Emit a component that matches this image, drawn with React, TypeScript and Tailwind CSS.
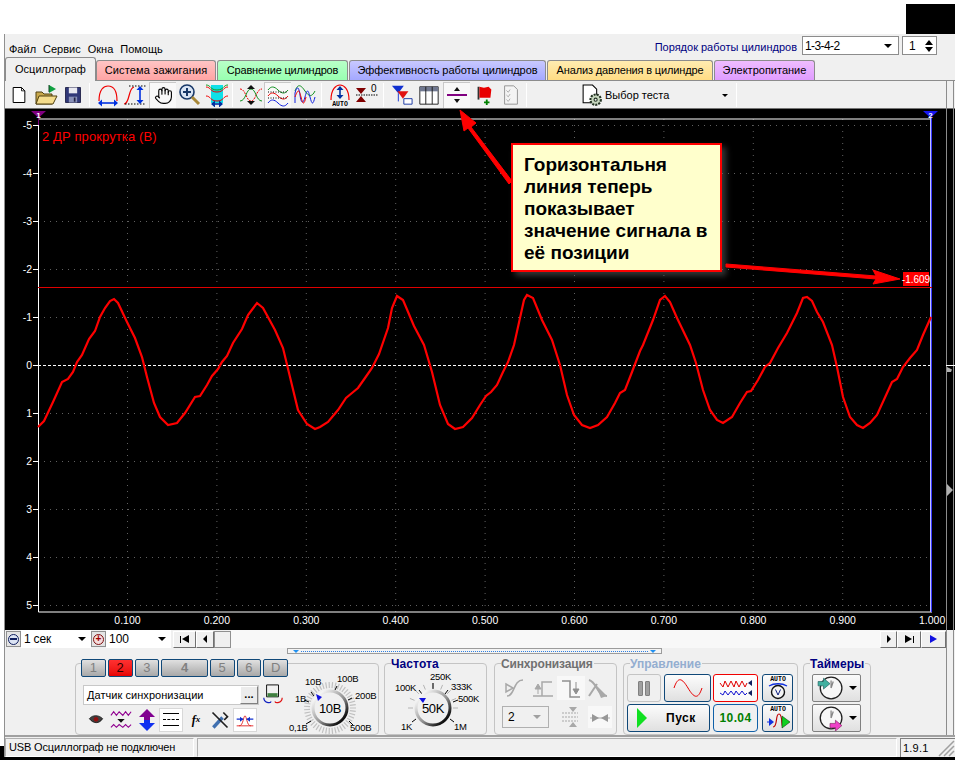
import React from 'react';
import { Hand } from 'lucide-react';

const wave =
  '38,427 44,421 53,402 62,382 68,379 73,372 77,362 82,355 89,339 95,331 100,317 105,308 110,301 114,299 118,303 127,322 135,338 142,357 147,377 154,403 160,417 168,425 177,423 185,413 195,397 200,396 207,385 212,376 218,369 222,362 227,356 233,343 242,329 248,315 257,303 263,308 275,330 283,348 290,377 298,410 307,424 315,429 320,427 ' +
  '328,422 338,410 346,398 352,393 358,388 365,378 372,368 379,354 388,328 392,308 397,296 403,300 414,326 424,345 432,372 440,405 448,424 455,429 463,427 472,418 480,405 486,396 491,392 497,385 503,372 508,362 514,345 520,318 524,300 527,295 533,298 542,320 552,340 560,365 567,395 574,415 582,425 590,428 598,425 607,417 615,403 620,393 625,390 632,372 ' +
  '640,351 643,345 653,320 660,300 665,296 670,302 677,318 690,345 696,363 703,390 710,410 717,420 723,423 732,417 740,403 747,392 751,391 758,380 765,367 770,363 778,348 787,333 797,313 803,298 807,297 812,301 817,312 823,322 832,345 837,367 843,397 850,417 857,425 863,428 870,423 877,415 887,393 892,382 897,379 903,367 910,358 917,350 923,335 931,317';

const yLabels = [-5, -4, -3, -2, -1, 0, 1, 2, 3, 4, 5];
const xLabels = ['0.100', '0.200', '0.300', '0.400', '0.500', '0.600', '0.700', '0.800', '0.900', '1.000'];

const tabs = [
  { label: 'Система зажигания', cls: 'w-[120px] tracking-[0.15px] from-[#ffc4c4] to-[#ffa4a4]' },
  { label: 'Сравнение цилиндров', cls: 'w-[131px] tracking-[-0.2px] from-[#b8ffc8] to-[#98ffb0]' },
  { label: 'Эффективность работы цилиндров', cls: 'w-[197px] tracking-[-0.05px] from-[#c8c8ff] to-[#a4a8ff]' },
  { label: 'Анализ давления в цилиндре', cls: 'w-[166px] tracking-[-0.15px] from-[#ffecb0] to-[#ffdc84]' },
  { label: 'Электропитание', cls: 'w-[101px] from-[#efbcff] to-[#e09cff]' },
];

const channels = [
  { label: '1', cls: 'w-[25px]' },
  { label: '2', cls: 'w-[25px]', active: true },
  { label: '3', cls: 'w-[25px]' },
  { label: '4', cls: 'w-[47px] font-bold' },
  { label: '5', cls: 'w-[25px]' },
  { label: '6', cls: 'w-[25px]' },
  { label: 'D', cls: 'w-[25px]' },
];

const Ico = ({ children, size = 24 }: { children: React.ReactNode; size?: number }) => (
  <svg width={size} height={size} viewBox="0 0 24 24" fill="none">
    {children}
  </svg>
);

const ArrowH = ({ y, x1, x2, c }: { y: number; x1: number; x2: number; c: string }) => (
  <>
    <path d={`M${x1} ${y}H${x2}`} stroke={c} strokeWidth="1.6" />
    <path d={`M${x1 - 1} ${y}l4-3.5v7zM${x2 + 1} ${y}l-4-3.5v7z`} fill={c} />
  </>
);

const ArrowV = ({ x, y1, y2, c }: { x: number; y1: number; y2: number; c: string }) => (
  <>
    <path d={`M${x} ${y1}V${y2}`} stroke={c} strokeWidth="1.6" />
    <path d={`M${x} ${y1 - 1}l-3.5 4h7zM${x} ${y2 + 1}l-3.5-4h7z`} fill={c} />
  </>
);

const Sep = () => <div className="w-[1px] h-[24px] bg-[#a8a8a8] border-r border-white" />;

const ToolBtn = ({ children, pressed, cls = '' }: { children: React.ReactNode; pressed?: boolean; cls?: string }) => (
  <div
    className={`w-[27px] h-[26px] flex items-center justify-center ${pressed ? 'bg-[#f8f8f8] border-t border-l border-[#c8c8c8]' : ''} ${cls}`}
  >
    {children}
  </div>
);

const Rail = () => <div className="w-[8px] self-stretch border-x border-[#8c8c8c] mr-[1px] shrink-0" />;

const CtrlBtn = ({ children, cls }: { children?: React.ReactNode; cls: string }) => (
  <div
    className={`h-[28px] flex items-center justify-center rounded-[3px] border bg-gradient-to-b from-[#fcfcfc] to-[#e0e0e0] ${cls}`}
  >
    {children}
  </div>
);

const Group = ({ title, titleCls, cls, children }: { title?: string; titleCls?: string; cls: string; children: React.ReactNode }) => (
  <div className={`relative h-[72px] border border-[#c4c4c4] rounded-[4px] ${cls}`}>
    {title && (
      <div className={`absolute -top-[7px] left-[6px] bg-[#f0f0f0] pr-[1px] text-[12px] leading-[14px] font-bold ${titleCls}`}>
        {title}
      </div>
    )}
    {children}
  </div>
);

const ticks = (cx: number, cy: number, r1: number, r2: number, from: number, to: number, n: number) =>
  Array.from({ length: n }, (_, i) => {
    const a = ((from + ((to - from) * i) / (n - 1)) * Math.PI) / 180;
    return `M${cx + r1 * Math.cos(a)} ${cy + r1 * Math.sin(a)}L${cx + r2 * Math.cos(a)} ${cy + r2 * Math.sin(a)}`;
  }).join('');

const Knob = ({ cx, cy, label, id }: { cx: number; cy: number; label: string; id: string }) => (
  <>
    <defs>
      <linearGradient id={id} x1="0" y1="0" x2="1" y2="1">
        <stop offset="0.15" stopColor="#f4f4f4" />
        <stop offset="0.55" stopColor="#909090" />
        <stop offset="0.85" stopColor="#101010" />
      </linearGradient>
    </defs>
    <circle cx={cx} cy={cy} r="17" fill="#f0f0f0" stroke={`url(#${id})`} strokeWidth="3" />
    <text x={cx} y={cy + 5} textAnchor="middle" fontSize="13" letterSpacing="-0.3" fill="#000">
      {label}
    </text>
  </>
);

const VoltDial = () => (
  <svg width="90" height="70" viewBox="288 664 90 70" className="shrink-0" fontFamily="Liberation Sans" fontSize="9.5" letterSpacing="-0.2" fill="#000">
    <path d={ticks(330, 708, 20, 26, 0, 360, 48)} stroke="#c0c0c0" strokeWidth="1.2" />
    <path
      d="M311 692l3 4M337 686l-2 4M352 698l-4 2M304 700l5 2M306 724l5-3M349 721l4 4"
      stroke="#000"
    />
    <Knob cx={330} cy={708} label="10В" id="voltKnob" />
    <path d="M316 694l6 3-4 4z" fill="#1010e0" />
    <text x="305" y="685">10В</text>
    <text x="337" y="682">100В</text>
    <text x="355" y="699">200В</text>
    <text x="295" y="702">1В</text>
    <text x="289" y="731">0,1В</text>
    <text x="350" y="731">500В</text>
  </svg>
);

const FreqDial = () => (
  <svg width="101" height="70" viewBox="385 664 101 70" className="shrink-0" fontFamily="Liberation Sans" fontSize="9.5" letterSpacing="-0.3" fill="#000">
    <path d={ticks(433, 708, 20, 25, -180, 0, 9)} stroke="#b4b4b4" />
    <path d="M433 683v6M419 690l3 4M448 690l-3 4M412 722l4-3M454 722l-4-3M458 700l-5 2" stroke="#000" />
    <Knob cx={433} cy={708} label="50K" id="freqKnob" />
    <path d="M419 698l7 0-3 5z" fill="#1010e0" />
    <text x="430" y="680">250K</text>
    <text x="395" y="691">100K</text>
    <text x="451" y="690">333K</text>
    <text x="458" y="702">500K</text>
    <text x="401" y="730">1K</text>
    <text x="454" y="730">1M</text>
  </svg>
);

const ClockIcon = ({ flip }: { flip?: boolean }) => (
  <Ico size={26}>
    <circle cx="13" cy="12" r="10" fill="#f8f8f8" stroke="#202020" strokeWidth="1.2" />
    <path d="M13 12l2-6M13 12V5" stroke="#888" strokeWidth="1.2" />
    {flip ? (
      <path d="M12 17h5v-3l6 5-6 5v-3h-5z" fill="#f040c8" stroke="#802060" strokeWidth="0.6" />
    ) : (
      <path d="M1 6h5V3l6 5-6 5v-3H1z" fill="#40b0a0" stroke="#206060" strokeWidth="0.6" />
    )}
  </Ico>
);

const AutoLabel = () => (
  <text x="12" y="6" textAnchor="middle" fontSize="6.5" fontWeight="bold" fontFamily="Liberation Mono" fill="#000">
    AUTO
  </text>
);

const Overlay = () => (
  <svg className="absolute left-0 top-0 pointer-events-none" width="959" height="760" viewBox="0 0 959 760">
    <path d="M512 181L471 127L476 123L460 110L464 131L468 128L509 184z" fill="#ff0000" stroke="#ff0000" />
    <path d="M726 264L876 276L873 270L900 279L873 284L876 279L726 267z" fill="#ff0000" stroke="#ff0000" />
  </svg>
);

export default function App() {
  return (
    <div className="relative w-[959px] h-[760px] bg-white overflow-hidden font-['Liberation_Sans',sans-serif] text-[11px] text-black">
      <div className="h-[34px] flex justify-end pr-[4px] pt-[4px]">
        <div className="w-[49px] h-[30px] bg-black" />
      </div>

      <div className="flex h-[723px]">
        <div className="w-[4px] flex flex-col justify-end">
          <div className="h-[11px] bg-black" />
        </div>

        <div className="w-[951px] flex flex-col bg-[#f0f0f0] border-l border-[#909090]">
          {/* menu */}
          <div className="h-[24px] flex shrink-0">
            <div className="flex items-end gap-[7px] pl-[4px] pb-[1px]">
              <span>Файл</span>
              <span>Сервис</span>
              <span>Окна</span>
              <span>Помощь</span>
            </div>
            <div className="ml-auto flex items-start pt-[2px] pr-[18px]">
              <span className="text-[#000080] mt-[3px] mr-[5px]">Порядок работы цилиндров</span>
              <div className="w-[97px] h-[19px] bg-white border border-[#8c8c8c] flex items-center justify-between pl-[2px] pr-[6px] tracking-[-0.6px]">
                <span className="text-[12px]">1-3-4-2</span>
                <span className="w-0 h-0 border-x-[4px] border-x-transparent border-t-[4px] border-t-black" />
              </div>
              <div className="w-[35px] h-[19px] ml-[3px] bg-white border border-[#8c8c8c] flex items-center justify-between pl-[6px] pr-[3px]">
                <span className="text-[12px]">1</span>
                <span className="flex flex-col gap-[2px]">
                  <span className="w-0 h-0 border-x-[4px] border-x-transparent border-b-[5px] border-b-black" />
                  <span className="w-0 h-0 border-x-[4px] border-x-transparent border-t-[5px] border-t-black" />
                </span>
              </div>
            </div>
          </div>

          {/* tabs */}
          <div className="h-[23px] flex items-end shrink-0 border-b border-[#8c8c8c]">
            <div className="w-[91px] h-[24px] -mb-[1px] bg-[#f0f0f0] border border-b-0 border-[#8c8c8c] rounded-t-[3px] flex items-center justify-center">
              Осциллограф
            </div>
            {tabs.map((t) => (
              <div
                key={t.label}
                className={`h-[20px] mr-[1px] bg-gradient-to-b border border-b-0 border-[#8c8c8c] rounded-t-[3px] flex items-center justify-center ${t.cls}`}
              >
                {t.label}
              </div>
            ))}
          </div>

          {/* toolbar */}
          <div className="h-[27px] flex items-center shrink-0">
            <ToolBtn>
              <Ico size={20}>
                <path d="M5 3h10l4 4v14H5z" fill="#fff" stroke="#000" strokeWidth="1.2" />
                <path d="M15 3v4h4" stroke="#000" />
              </Ico>
            </ToolBtn>
            <ToolBtn>
              <Ico>
                <path d="M2 9h6l2 2h8v10H2z" fill="#c8a84c" stroke="#504010" />
                <path d="M5 13h18l-4 8H2z" fill="#f4dc8c" stroke="#504010" />
                <path d="M15 2l7 4-7 4z" fill="#10a040" />
                <path d="M15 2v7" stroke="#104020" />
              </Ico>
            </ToolBtn>
            <ToolBtn>
              <Ico size={20}>
                <path d="M3 3h18v18H3z" fill="#303878" stroke="#181840" />
                <path d="M7 3h10v7H7z" fill="#e8e8f0" />
                <path d="M7 14h10v7H7z" fill="#8890b8" />
                <path d="M13 15h2v5h-2z" fill="#202040" />
              </Ico>
            </ToolBtn>
            <div className="ml-[3px] mr-[4px]"><Sep /></div>
            <ToolBtn>
              <Ico>
                <path d="M3 18C3 6 8 3 12 3s9 3 9 15" stroke="#f00000" strokeWidth="1.2" />
                <ArrowH y={20} x1={3} x2={21} c="#0030e0" />
              </Ico>
            </ToolBtn>
            <ToolBtn>
              <Ico>
                <path d="M1 21c6 0 4-16 10-17" stroke="#f00000" strokeWidth="1.2" />
                <path d="M6 3h17M2 21h20" stroke="#000" strokeDasharray="1.5 1.5" />
                <ArrowV x={17} y1={4} y2={20} c="#0030e0" />
              </Ico>
            </ToolBtn>
            <ToolBtn pressed cls="ml-[1px]">
              <Hand size={19} strokeWidth={1.4} color="#000" />
            </ToolBtn>
            <ToolBtn>
              <Ico>
                <circle cx="9" cy="9" r="7" fill="#d8e4f4" stroke="#183868" strokeWidth="1.6" />
                <path d="M5 9h8M9 5v8" stroke="#183868" strokeWidth="2" />
                <path d="M14 14l7 7" stroke="#a88838" strokeWidth="3" />
              </Ico>
            </ToolBtn>
            <ToolBtn>
              <Ico>
                <path d="M6 2h12v18H6z" fill="#10e0e8" />
                <path d="M1 4c5 0 4 5 11 5s6-5 11-5M1 13c5 0 4 5 11 5s6-5 11-5" stroke="#f00000" />
                <path d="M1 2c5 0 4 5 11 5s6-5 11-5" stroke="#10a020" />
                <ArrowH y={21} x1={7} x2={17} c="#0030a0" />
              </Ico>
            </ToolBtn>
            <div className="ml-[2px] mr-[4px]"><Sep /></div>
            <ToolBtn>
              <Ico>
                <path d="M1 6c6 0 6 12 11 12s5-12 11-12" stroke="#f00000" strokeDasharray="2 1" />
                <path d="M1 18c6 0 6-12 11-12s5 12 11 12" stroke="#109020" />
                <path d="M12 2l-4 4h8zM12 22l-4-4h8z" fill="#101010" />
              </Ico>
            </ToolBtn>
            <ToolBtn pressed>
              <Ico>
                <path d="M2 7c3-4 6-4 10 0s7 4 10 0" stroke="#109020" />
                <path d="M2 13c3-4 6-4 10 0s7 4 10 0" stroke="#f00000" />
                <path d="M2 20c3-4 6-4 10 0s7 4 10 0" stroke="#1020e0" />
                <path d="M2 9h20M2 15h20" stroke="#000" strokeDasharray="1 1.5" />
              </Ico>
            </ToolBtn>
            <ToolBtn>
              <Ico>
                <path d="M2 8c3-8 6-6 10 0s7 6 10 0" stroke="#109020" />
                <path d="M2 20V10c2-8 4-6 5 2s3 10 5 2 3-8 5 0 3 8 5 0" stroke="#1020e0" />
                <path d="M2 14c3-8 4-8 6 0s3 8 5 0" stroke="#f00000" />
              </Ico>
            </ToolBtn>
            <div className="ml-[3px] mr-[4px]"><Sep /></div>
            <ToolBtn>
              <svg width="24" height="24" viewBox="0 0 24 24" fill="none">
                <path d="M3 17C3 6 8 2 12 2s9 4 9 15" stroke="#f00000" strokeWidth="1.2" />
                <ArrowV x={12} y1={4} y2={15} c="#0030a0" />
                <text x="12" y="23" textAnchor="middle" fontSize="6.5" fontWeight="bold" fontFamily="Liberation Mono" fill="#000">AUTO</text>
              </svg>
            </ToolBtn>
            <ToolBtn>
              <svg width="24" height="24" viewBox="0 0 24 24" fill="none">
                <path d="M1 12h22" stroke="#000" strokeDasharray="1.5 1" />
                <path d="M6 11L1 5h10zM6 13l-5 6h10z" fill="#800000" />
                <text x="16" y="9" fontSize="10" fill="#000" fontFamily="Liberation Sans">0</text>
              </svg>
            </ToolBtn>
            <div className="ml-[3px] mr-[4px]"><Sep /></div>
            <ToolBtn>
              <svg width="22" height="22" viewBox="0 0 24 24" fill="none">
                <path d="M1 2h13l-6 8z" fill="#1030d0" />
                <path d="M7 8h12l-6 8z" fill="#e01010" />
                <path d="M8 10v9" stroke="#1030d0" />
                <path d="M14 16h9v6h-9z" fill="#fff" stroke="#1030a0" />
              </svg>
            </ToolBtn>
            <ToolBtn>
              <Ico size={22}>
                <path d="M2 3h20v19H2z" fill="#fff" stroke="#181818" />
                <path d="M2 3h20v5H2z" fill="#707890" />
                <path d="M8.5 3v19M15.5 3v19" stroke="#181818" />
              </Ico>
            </ToolBtn>
            <ToolBtn pressed cls="ml-[1px]">
              <Ico>
                <path d="M2 12h20" stroke="#800080" strokeWidth="2" />
                <path d="M12 4l-3 4h6zM12 20l-3-4h6z" fill="#101010" />
              </Ico>
            </ToolBtn>
            <ToolBtn>
              <Ico size={22}>
                <path d="M6 3v14" stroke="#303030" strokeWidth="2" />
                <path d="M7 3l5 1 5-1 3 3-1 9H7z" fill="#e80000" />
                <path d="M12 20h6M15 17v6" stroke="#008000" strokeWidth="2" />
              </Ico>
            </ToolBtn>
            <ToolBtn>
              <Ico size={22}>
                <path d="M5 2h10l4 4v16H5z" fill="#f4f4f4" stroke="#909090" />
                <path d="M7 7l2 2 2-3M7 12l2 2 2-3M7 17l2 2 2-3" stroke="#a8a8a8" />
              </Ico>
            </ToolBtn>
            <div className="ml-[2px]"><Sep /></div>
            <div className="w-[209px] h-[26px] relative flex items-center pl-[53px] pt-[2px] shrink-0">
              <Ico size={25}>
                <path d="M3 2h9l4 4v13H3z" fill="#fff" stroke="#000" />
                <circle cx="15" cy="16" r="5" fill="#c8d8c0" stroke="#203020" strokeWidth="2" strokeDasharray="2 1" />
                <circle cx="15" cy="16" r="1.5" fill="#f0f0f0" stroke="#203020" />
              </Ico>
              <span>Выбор теста</span>
              <span className="ml-auto mr-[8px] w-0 h-0 border-x-[3px] border-x-transparent border-t-[3px] border-t-black" />
            </div>
            <Sep />
            <div className="flex-1" />
            <Rail />
          </div>

          {/* plot */}
          <svg width="950" height="522" viewBox="5 108 950 522" className="block shrink-0 bg-black" fontFamily="Liberation Sans" fontSize="10.5">
            <path d="M5 108H955" stroke="#e8e8e8" />
            <path d="M946.5 108V630M953.5 108V630" stroke="#8c8c8c" />
            {yLabels.map((v, i) => (
              <g key={v}>
                {v !== 0 && <path d={`M38 ${125.5 + i * 48}H932`} stroke="#606060" strokeDasharray="1 5" />}
                <path d={`M33 ${125.5 + i * 48}H38`} stroke="#fff" />
                <text x="32" y={129 + i * 48} textAnchor="end" fill="#fff">{v}</text>
              </g>
            ))}
            {xLabels.map((v, i) => (
              <g key={v}>
                {i < 9 && <path d={`M${127.5 + i * 89.4} 119V612`} stroke="#606060" strokeDasharray="1 5" />}
                <text x={127.5 + i * 89.4} y="624" textAnchor="middle" fill="#fff">{v}</text>
              </g>
            ))}
            <path d="M38.5 119H932M38.5 612H932" stroke="#fff" />
            <path d="M38.5 119V612" stroke="#fff" />
            <path d="M38 365.5H932" stroke="#fff" strokeDasharray="3 2" />
            <path d="M946 365.5H955" stroke="#fff" />
            <path d="M931.5 118V612" stroke="#3838ff" />
            <path d="M930.5 118V612" stroke="#c0c0ff" />
            <path d="M31 111H46L38.5 118z" fill="#800080" />
            <path d="M38.5 111V125" stroke="#800080" />
            <text x="38.5" y="118" textAnchor="middle" fontSize="8" fontWeight="bold" fill="#fff">1</text>
            <path d="M923 111H938L930.5 118z" fill="#1818f0" />
            <text x="930.5" y="118" textAnchor="middle" fontSize="8" fontWeight="bold" fill="#fff">2</text>
            <path d="M947 367l5 2.5-1 2.5h-4zM947 484l6 6-6 6z" fill="#b0b0b0" />
            <path d="M38 287.5H932" stroke="#e00000" />
            <polyline points={wave} stroke="#ff0000" strokeWidth="2.2" fill="none" />
            <text x="42" y="141" fontSize="13" fill="#ff0000" letterSpacing="0.1">2 ДР прокрутка (В)</text>
            <rect x="903" y="272" width="26" height="14" fill="#ff0000" />
            <text x="916" y="283" fontSize="10" textAnchor="middle" fill="#fff">-1.609</text>
          </svg>

          {/* scroller row */}
          <div className="h-[18px] flex shrink-0">
            <div className="flex items-center pl-[1px] flex-1">
              <div className="w-[15px] h-[16px] bg-[#e4e4e4] border border-[#909090] flex items-center justify-center">
                <span className="w-[11px] h-[11px] rounded-full bg-[#dce4f4] border border-[#102060] flex items-center justify-center">
                  <span className="w-[7px] h-[2px] bg-[#102060]" />
                </span>
              </div>
              <div className="w-[70px] h-[18px] bg-white flex items-center justify-between pl-[3px] pr-[5px] text-[12px] tracking-[-0.2px]">
                <span>1 сек</span>
                <span className="w-0 h-0 border-x-[4px] border-x-transparent border-t-[4px] border-t-black" />
              </div>
              <div className="w-[15px] h-[16px] bg-[#e4e4e4] border border-[#909090] flex items-center justify-center">
                <span className="w-[11px] h-[11px] rounded-full bg-[#f4dcdc] border border-[#801010] flex items-center justify-center text-[#a00000] text-[10px] leading-none font-bold">+</span>
              </div>
              <div className="w-[65px] h-[18px] bg-white flex items-center justify-between pl-[3px] pr-[5px] text-[12px]">
                <span>100</span>
                <span className="w-0 h-0 border-x-[4px] border-x-transparent border-t-[4px] border-t-black" />
              </div>
              <div className="w-[23px] h-[17px] ml-[2px] bg-[#f0f0f0] border border-t-white border-l-white border-[#707070] flex items-center justify-center gap-[1px]">
                <span className="w-[1px] h-[7px] bg-black" />
                <span className="w-0 h-0 border-y-[4px] border-y-transparent border-r-[7px] border-r-black" />
              </div>
              <div className="w-[18px] h-[17px] bg-[#f0f0f0] border border-t-white border-l-white border-[#707070] flex items-center justify-center">
                <span className="w-0 h-0 border-y-[4px] border-y-transparent border-r-[4px] border-r-black" />
              </div>
              <div className="w-[17px] h-[17px] bg-[#f0f0f0] border border-[#909090]" />
              <div className="flex-1 h-[18px] bg-[#f8f8f8]" />
              <div className="w-[17px] h-[17px] bg-[#f0f0f0] border border-t-white border-l-white border-[#707070] flex items-center justify-center">
                <span className="w-0 h-0 border-y-[4px] border-y-transparent border-l-[4px] border-l-black" />
              </div>
              <div className="w-[24px] h-[17px] bg-[#f0f0f0] border border-t-white border-l-white border-[#707070] flex items-center justify-center gap-[1px]">
                <span className="w-0 h-0 border-y-[4px] border-y-transparent border-l-[7px] border-l-black" />
                <span className="w-[1px] h-[7px] bg-black" />
              </div>
              <div className="w-[25px] h-[17px] bg-[#f0f0f0] border border-t-white border-l-white border-[#707070] flex items-center justify-center">
                <span className="w-0 h-0 border-y-[4px] border-y-transparent border-l-[7px] border-l-[#1010e0]" />
              </div>
            </div>
            <Rail />
          </div>

          {/* control panel */}
          <div className="h-[89px] flex shrink-0 border-b-2 border-[#a0a0a0]">
            <div className="flex-1 flex flex-col">
              <div className="ml-[282px] w-[375px] h-[6px] border border-[#9c9c9c] bg-[#f4f4f4] flex items-center justify-between px-[5px]">
                <span className="w-0 h-0 border-x-[3px] border-x-transparent border-t-[3px] border-t-[#2090f0]" />
                <span className="flex-1 mx-[2px] border-t border-dotted border-[#3080e0]" />
                <span className="w-0 h-0 border-x-[3px] border-x-transparent border-t-[3px] border-t-[#2090f0]" />
              </div>

              <div className="flex mt-[9px] ml-[70px]">
                {/* channels */}
                <Group cls="w-[304px] flex">
                  <div className="w-[212px] shrink-0 flex flex-col">
                    <div className="flex gap-[2px] ml-[5px] -mt-[5px] bg-[#f0f0f0]">
                      {channels.map((c) => (
                        <div
                          key={c.label}
                          className={`h-[18px] rounded-[2px] border border-[#104878] flex items-center justify-center text-[13px] ${c.cls} ${
                            c.active
                              ? 'bg-gradient-to-b from-[#ff3030] to-[#e80000] text-[#300000]'
                              : 'bg-gradient-to-b from-[#e0e0e0] to-[#a8a8a8] text-[#808080]'
                          }`}
                        >
                          {c.label}
                        </div>
                      ))}
                    </div>
                    <div className="flex mt-[7px] ml-[7px] items-center">
                      <div className="w-[176px] h-[20px] bg-white border border-[#c8c8c8] flex items-center justify-between pl-[3px] tracking-[0.05px]">
                        <span>Датчик синхронизации</span>
                        <span className="w-[18px] h-[18px] bg-[#ececec] border border-t-white border-l-white border-[#808080] flex items-center justify-center font-bold leading-none pb-[2px]">...</span>
                      </div>
                      <div className="ml-[3px]">
                        <Ico size={22}>
                          <path d="M5 1h13v13H5z" fill="#f0f0f0" stroke="#000" />
                          <path d="M6 10h11v4H6z" fill="#408040" />
                          <path d="M2 15c0 6 7 6 8 4" stroke="#1020c0" strokeWidth="1.3" />
                          <path d="M22 15c0 6-7 6-8 4" stroke="#e01010" strokeWidth="1.3" />
                        </Ico>
                      </div>
                    </div>
                    <div className="flex items-center ml-[8px] mt-[1px] h-[25px]">
                      <div className="w-[24px] flex justify-center">
                        <Ico size={16}>
                          <path d="M2 10c5-6 14-6 20 0-5 8-14 8-20 0z" fill="#404040" stroke="#000" />
                          <circle cx="12" cy="11" r="3.5" fill="#901010" />
                        </Ico>
                      </div>
                      <div className="w-[26px] flex justify-center">
                        <Ico size={22}>
                          <path d="M1 7l3-4 3 4 3-4 4 4 3-4 3 4 3-4M1 20l3-3 3 3 3-3 4 3 3-3 3 3 3-3" stroke="#900090" strokeWidth="1.2" />
                          <path d="M8 11h8l-4 4z" fill="#101010" />
                        </Ico>
                      </div>
                      <div className="w-[25px] flex justify-center">
                        <Ico>
                          <path d="M12 1l8 8h-5v3H9V9H4z" fill="#800090" />
                          <path d="M12 23l8-8h-5v-3H9v3H4z" fill="#1030f0" />
                        </Ico>
                      </div>
                      <div className="w-[24px] h-[24px] bg-white border border-[#d8d8d8] flex flex-col justify-center gap-[5px] px-[3px]">
                        <span className="h-[1px] bg-black" />
                        <span className="border-t border-dashed border-black" />
                        <span className="h-[1px] bg-black" />
                      </div>
                      <div className="w-[26px] flex justify-center font-['Liberation_Serif',serif] italic font-bold text-[12px]">
                        f<span className="text-[9px] mt-[2px]">x</span>
                      </div>
                      <div className="w-[21px] flex justify-center">
                        <Ico size={20}>
                          <path d="M4 21L15 9" stroke="#4070b0" strokeWidth="4" />
                          <path d="M3 3l18 18M16 3l5 5-4 4" stroke="#202020" strokeWidth="2" />
                        </Ico>
                      </div>
                      <div className="w-[24px] h-[24px] ml-[3px] bg-white border border-[#d8d8d8] flex items-center justify-center">
                        <Ico size={20}>
                          <path d="M2 19h20" stroke="#e01010" />
                          <path d="M5 19c5 0 5-12 7-12s2 12 7 12" stroke="#e01010" />
                          <path d="M2 11h8M22 11h-8" stroke="#1030d0" strokeWidth="1.5" />
                          <path d="M10 11l-4-3v6zM14 11l4-3v6z" fill="#1030d0" />
                        </Ico>
                      </div>
                    </div>
                  </div>
                  <VoltDial />
                </Group>

                {/* frequency */}
                <Group cls="w-[103px] ml-[5px]" title="Частота" titleCls="text-[#000080] tracking-[0.1px]">
                  <FreqDial />
                </Group>

                {/* sync */}
                <Group cls="w-[123px] ml-[7px]" title="Синхронизация" titleCls="text-[#707070] tracking-[-0.15px]">
                  <div className="flex pl-[6px] mt-[12px]">
                    <div className="w-[28px] flex justify-center">
                      <Ico>
                        <path d="M3 8l7 4-7 4zM4 20c8 0 6-16 16-16" stroke="#a8a8a8" strokeWidth="1.5" />
                      </Ico>
                    </div>
                    <div className="w-[28px] flex justify-center">
                      <Ico>
                        <path d="M2 20h9V6h10M2 20h20" stroke="#a8a8a8" strokeWidth="1.5" />
                        <path d="M7 8l-3 5h6zM7 12v6" stroke="#a8a8a8" fill="#a8a8a8" />
                      </Ico>
                    </div>
                    <div className="w-[28px] flex justify-center bg-[#f8f8f8]">
                      <Ico>
                        <path d="M3 5h8v16h10" stroke="#909090" strokeWidth="1.5" />
                        <path d="M17 18l-3-5h6zM17 6v8" stroke="#909090" fill="#909090" />
                      </Ico>
                    </div>
                    <div className="w-[28px] flex justify-center">
                      <Ico>
                        <path d="M2 4c8 2 8 16 18 16M2 20l8-12" stroke="#a8a8a8" strokeWidth="2" />
                        <path d="M8 8l12 12-6 2z" fill="#a8a8a8" />
                      </Ico>
                    </div>
                  </div>
                  <div className="flex items-center pl-[7px] mt-[5px]">
                    <div className="w-[47px] h-[22px] border border-[#b0b0b0] flex items-center justify-between pl-[5px] pr-[7px] text-[12px]">
                      <span>2</span>
                      <span className="w-0 h-0 border-x-[4px] border-x-transparent border-t-[4px] border-t-[#a0a0a0]" />
                    </div>
                    <div className="w-[26px] ml-[11px] flex justify-center">
                      <Ico>
                        <path d="M1 8h16M1 12h16M1 16h16" stroke="#a8a8a8" strokeDasharray="2 1" />
                        <path d="M16 2h-8l4 5zM16 22h-8l4-5z" fill="#a8a8a8" />
                      </Ico>
                    </div>
                    <div className="w-[24px] ml-[2px] h-[22px] flex justify-center bg-[#f8f8f8]">
                      <Ico>
                        <path d="M2 12h20" stroke="#a8a8a8" />
                        <path d="M11 12L4 8v8zM13 12l7-4v8z" fill="#989898" />
                      </Ico>
                    </div>
                  </div>
                </Group>

                {/* control */}
                <Group cls="w-[175px] ml-[6px]" title="Управление" titleCls="text-[#94aed0]">
                  <div className="flex ml-[3px] mt-[10px]">
                    <div className="w-[34px] h-[28px] rounded-[3px] border border-[#c4c4c4] flex items-center justify-center gap-[2px]">
                      <span className="w-[5px] h-[15px] bg-[#a0a0a0] border border-[#808080] rounded-[1px]" />
                      <span className="w-[5px] h-[15px] bg-[#a0a0a0] border border-[#808080] rounded-[1px]" />
                    </div>
                    <CtrlBtn cls="w-[47px] ml-[3px] border-[#104878]">
                      <svg width="32" height="24" viewBox="0 0 32 24" fill="none">
                        <path d="M2 12C6 0 10 2 16 12s10 12 14 0" stroke="#e80000" />
                      </svg>
                    </CtrlBtn>
                    <CtrlBtn cls="w-[45px] ml-[2px] border-[#f00000] from-[#ffffff] to-[#f8f8f8]">
                      <svg width="34" height="22" viewBox="0 0 34 22" fill="none">
                        <path d="M1 6l3 4 2-6 3 6 3-6 3 6 2-6 3 6 3-6 3 6 2-4" stroke="#e00000" />
                        <path d="M1 16l3 2 2-4 3 4 3-4 3 4 2-4 3 4 3-4 3 4 2-2" stroke="#1010d0" />
                        <path d="M33 3v6l-4-3zM33 13v6l-4-3z" fill="#102060" />
                      </svg>
                    </CtrlBtn>
                    <CtrlBtn cls="w-[31px] ml-[4px] border-[#104878]">
                      <svg width="24" height="26" viewBox="0 0 24 26" fill="none">
                        <AutoLabel />
                        <path d="M3 11c5-3 13-3 18 0" stroke="#1030e0" strokeWidth="1.3" />
                        <circle cx="12" cy="17" r="6.5" fill="#f4f4f4" stroke="#101010" strokeWidth="1.4" />
                        <path d="M9.5 14.5l2.5 5.5 2.5-5.5" stroke="#102080" />
                      </svg>
                    </CtrlBtn>
                  </div>
                  <div className="flex ml-[3px] mt-[2px]">
                    <CtrlBtn cls="w-[83px] border-[#104878] justify-start relative">
                      <span className="w-0 h-0 ml-[9px] border-y-[10px] border-y-transparent border-l-[10px] border-l-[#10e020]" />
                      <span className="ml-[19px] text-[12px] font-bold tracking-[0.5px]">Пуск</span>
                    </CtrlBtn>
                    <div className="w-[45px] h-[28px] ml-[3px] rounded-[4px] border border-[#1060a8] bg-[#f0f0f0] flex items-center justify-center text-[#008000] font-bold text-[12px] tracking-[0.4px]">
                      10.04
                    </div>
                    <CtrlBtn cls="w-[31px] ml-[4px] border-[#104878]">
                      <svg width="26" height="26" viewBox="0 0 24 26" fill="none">
                        <AutoLabel />
                        <path d="M1 17h5M18 17h-2" stroke="#1030e0" />
                        <path d="M3 13l5 4-5 4z" fill="#1030e0" />
                        <path d="M7 22c5 0 2-13 6-13s2 13 4 13" stroke="#c00000" strokeWidth="1.2" />
                        <path d="M16 11l8 6-8 6z" fill="#10d020" stroke="#104010" strokeWidth="0.6" />
                      </svg>
                    </CtrlBtn>
                  </div>
                </Group>

                {/* timers */}
                <Group cls="w-[68px] ml-[5px]" title="Таймеры" titleCls="text-[#000080]">
                  <div className="flex flex-col gap-[2px] ml-[8px] mt-[10px]">
                    <div className="w-[49px] h-[28px] rounded-[2px] border border-[#808080] bg-gradient-to-b from-[#fafafa] to-[#e0e0e0] flex items-center pl-[4px]">
                      <ClockIcon />
                      <span className="ml-[6px] w-0 h-0 border-x-[4px] border-x-transparent border-t-[4px] border-t-black" />
                    </div>
                    <div className="w-[49px] h-[28px] rounded-[2px] border border-[#808080] bg-gradient-to-b from-[#fafafa] to-[#e0e0e0] flex items-center pl-[4px]">
                      <ClockIcon flip />
                      <span className="ml-[6px] w-0 h-0 border-x-[4px] border-x-transparent border-t-[4px] border-t-black" />
                    </div>
                  </div>
                </Group>
              </div>
            </div>
            <Rail />
          </div>

          {/* status */}
          <div className="flex-1 flex items-stretch gap-[3px] pt-[1px]">
            <div className="w-[189px] border border-t-[#b0b0b0] border-l-[#b0b0b0] border-r-white border-b-white flex items-center pl-[3px] whitespace-nowrap tracking-[-0.15px]">
              USB Осциллограф не подключен
            </div>
            <div className="w-[700px] border border-t-[#b0b0b0] border-l-[#b0b0b0] border-r-white border-b-white" />
            <div className="flex-1 flex border-t border-l border-[#808080] items-center pl-[2px] tracking-[0.2px]">
              1.9.1
              <svg width="18" height="18" viewBox="0 0 18 18" className="ml-auto" fill="none">
                <path d="M2 17L17 2M7 17L17 7M12 17l5-5" stroke="#a0a0a0" strokeWidth="1.5" />
              </svg>
            </div>
          </div>
        </div>
      </div>

      <div className="w-[955px] h-[3px] bg-black" />

      {/* callout lies over the plot */}
      <div className="absolute left-[511px] top-[143px] w-[211px] h-[129px] bg-[#ffffcc] border-[2px] border-[#ff0000] shadow-[4px_4px_6px_rgba(90,90,90,0.6)] pl-[11px] pt-[9px] font-bold text-[19px] leading-[22px] whitespace-nowrap">
        Горизонтальня
        <br />
        линия теперь
        <br />
        показывает
        <br />
        значение сигнала в
        <br />
        её позиции
      </div>
      <Overlay />
    </div>
  );
}
